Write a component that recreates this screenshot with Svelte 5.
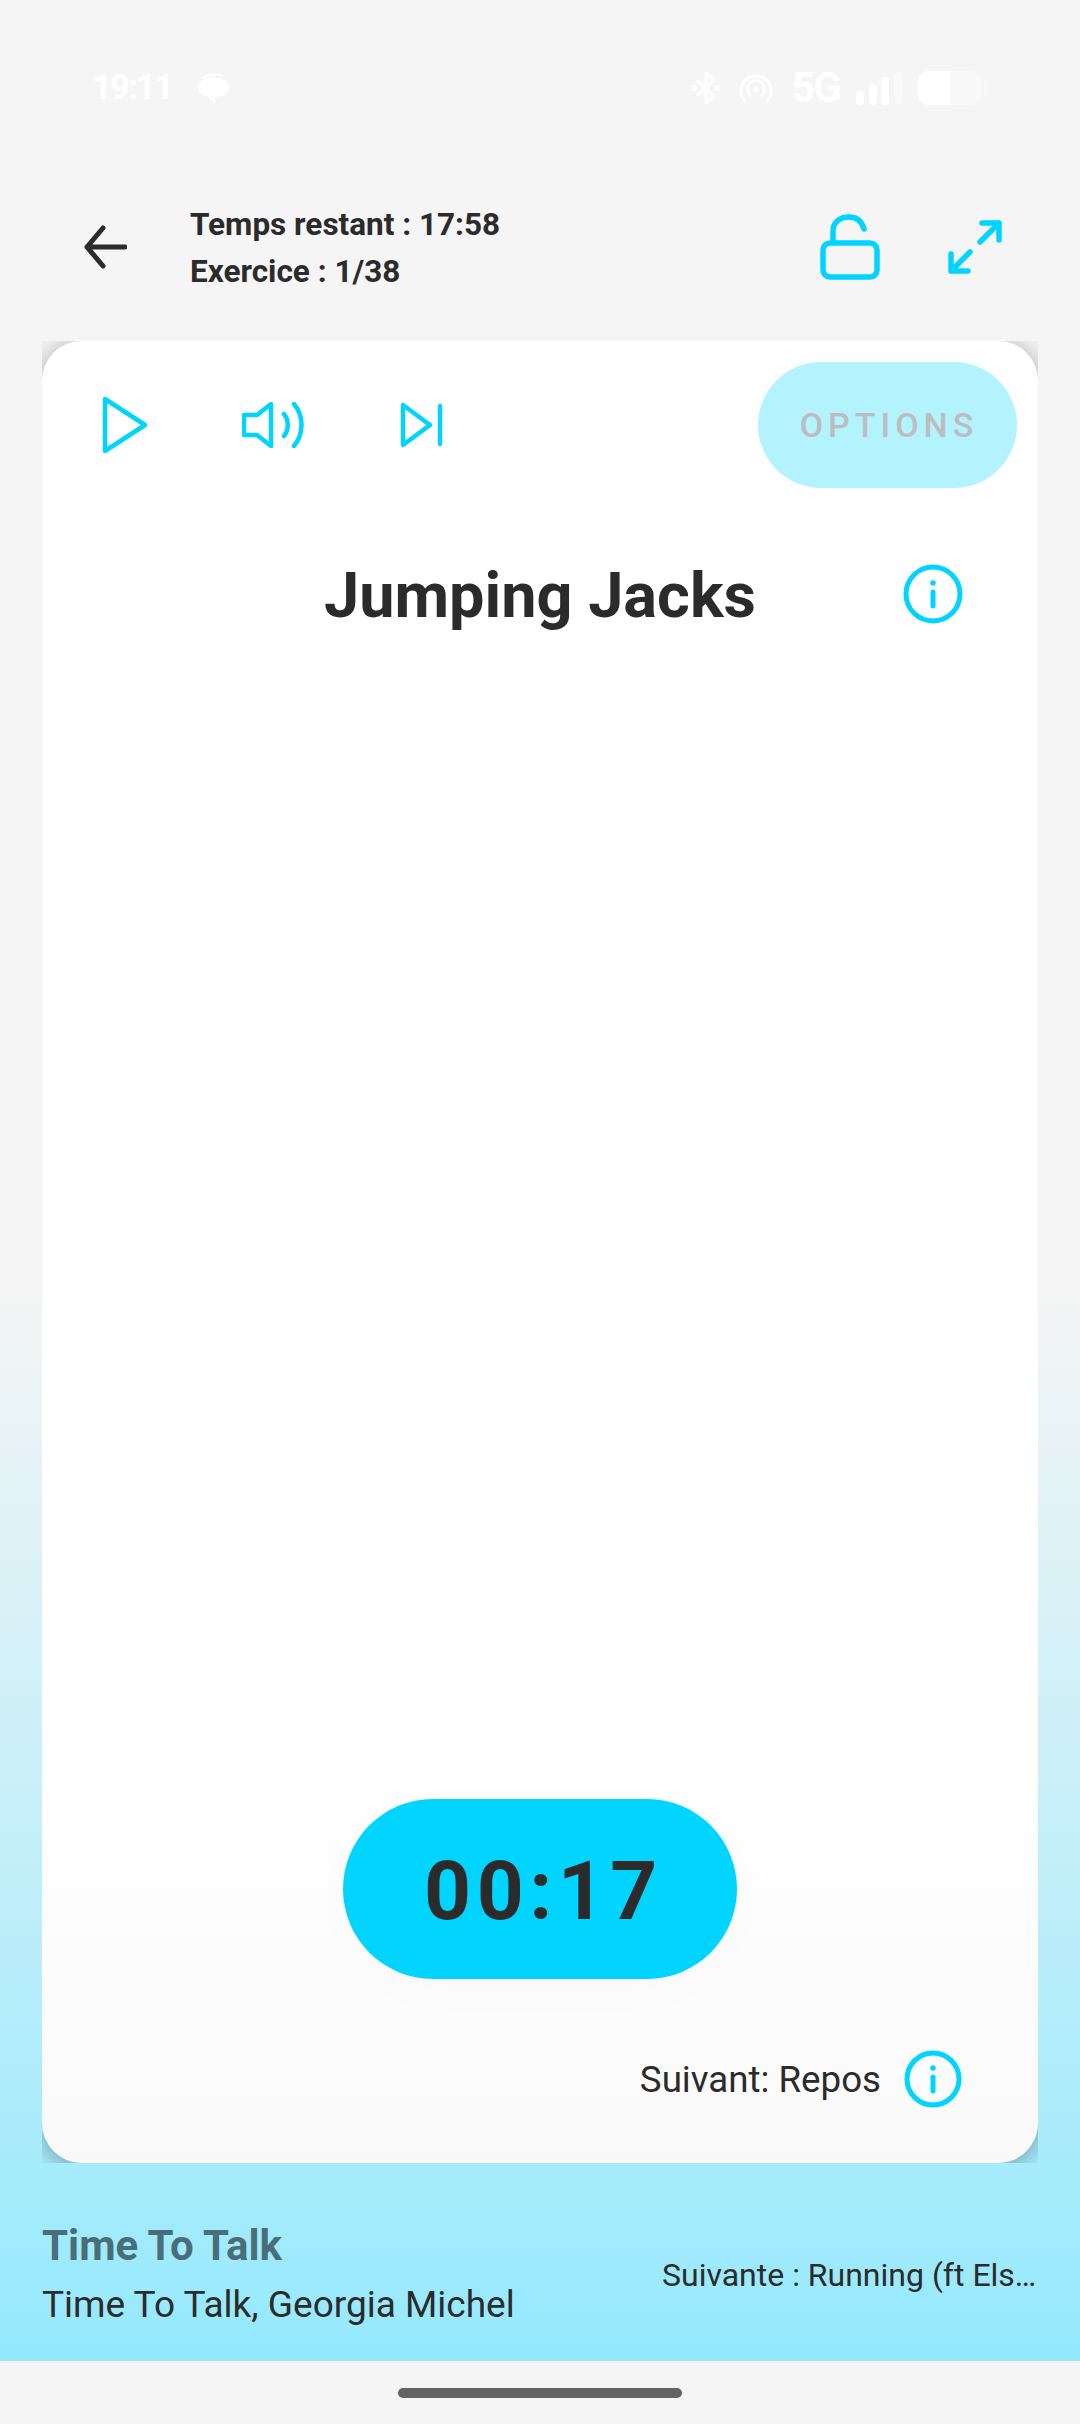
<script>
	let track = { title: 'Time To Talk', artist: 'Time To Talk, Georgia Michel' }
	let nextTrack = 'Suivante : Running (ft Elsa Lune)'
</script>

<div class="page">
	<div class="status">
		<div class="status-left">
			<span class="time">19:11</span>
			<svg width="34" height="34" viewBox="0 0 32 32" fill="#fff">
				<path d="M5 8c1-4 6-6 12-6 5 0 9 1 10 3-7-1-17 0-22 3z" opacity=".8" />
				<path d="M2 15c0-6 6-9 14-9s15 3 15 9-6 9-11 9h-2v7l-7-7C6 23 2 20 2 15z" />
			</svg>
		</div>
		<div class="status-right">
			<svg class="bt" width="28" height="34" viewBox="0 0 28 34" fill="none" stroke="#fff" stroke-width="3.4" stroke-linecap="round" stroke-linejoin="round">
				<path d="M6 10l16 15-8 7V2l8 7L6 24" />
				<circle cx="2.5" cy="17" r="1.4" fill="#fff" />
				<circle cx="25.5" cy="17" r="1.4" fill="#fff" />
			</svg>
			<svg class="hotspot" width="34" height="30" viewBox="0 0 34 30" fill="none" stroke="#fff" stroke-width="3" stroke-linecap="round">
				<path d="M6 28A15 15 0 1 1 28 28" />
				<path d="M11 22A8.5 8.5 0 1 1 23 22" />
				<circle cx="17" cy="16" r="2.6" fill="#fff" stroke="none" />
			</svg>
			<span class="net">5G</span>
			<svg class="bars" width="46" height="33" viewBox="0 0 46 33" fill="#fff">
				<rect x="0" y="19" width="8" height="14" rx="4" />
				<rect x="13" y="12" width="8" height="21" rx="4" />
				<rect x="25" y="5" width="8" height="28" rx="4" />
				<rect x="38" y="0" width="8" height="33" rx="4" opacity=".4" />
			</svg>
			<div class="battery">
				<div class="battery-level"></div>
			</div>
			<div class="battery-tip"></div>
		</div>
	</div>

	<header class="top">
		<button class="back" aria-label="Retour">
			<svg width="44" height="44" viewBox="0 0 44 44" fill="none" stroke="#2b2b2b" stroke-width="5" stroke-linecap="round" stroke-linejoin="round">
				<path d="M42 22H4M20 3L4 22l16 19" />
			</svg>
		</button>
		<div class="session">
			<div>Temps restant : 17:58</div>
			<div>Exercice : 1/38</div>
		</div>
		<svg class="lock" width="60" height="66" viewBox="0 0 60 66" fill="none" stroke="#00d4ff" stroke-width="5.5" stroke-linecap="round" stroke-linejoin="round">
			<rect x="3" y="29" width="54" height="34" rx="7" />
			<path d="M13 28V17C13 8 20 3 29 3S42 8 44 15" />
		</svg>
		<svg class="expand" width="54" height="54" viewBox="0 0 54 54" fill="none" stroke="#00d4ff" stroke-width="5.5" stroke-linecap="round" stroke-linejoin="round">
			<path d="M34 3h17v17M51 3L32 22M3 34v17h17M3 51l19-19" />
		</svg>
	</header>

	<div class="card-clip">
		<main class="card">
			<div class="controls">
				<svg width="46" height="58" viewBox="0 0 46 58" fill="none" stroke="#00d4ff" stroke-width="4.5" stroke-linejoin="round">
					<path d="M3 3L43 29 3 55z" />
				</svg>
				<svg width="64" height="46" viewBox="0 0 64 46" fill="none" stroke="#00d4ff" stroke-width="4.5" stroke-linecap="round" stroke-linejoin="round">
					<path d="M2 13h13L29 2v42L15 33H2z" />
					<path d="M42 12c5 6 5 16 0 22M52 2c10 12 10 30 0 42" />
				</svg>
				<svg width="44" height="46" viewBox="0 0 44 46" fill="none" stroke="#00d4ff" stroke-width="4.5" stroke-linecap="round" stroke-linejoin="round">
					<path d="M3 3l27 20L3 43z" />
					<path d="M40 4v38" />
				</svg>
				<button class="options">OPTIONS</button>
			</div>

			<div class="title-row">
				<h1>Jumping Jacks</h1>
				<svg class="info" width="60" height="60" viewBox="0 0 60 60" fill="none" stroke="#00d4ff" stroke-width="5" stroke-linecap="round">
					<circle cx="30" cy="30" r="27" />
					<path d="M30 28v14" />
					<circle cx="30" cy="19" r="2" fill="#00d4ff" stroke-width="1.500" />
				</svg>
			</div>

			<div class="timer">00:17</div>

			<div class="next">
				<span>Suivant: Repos</span>
				<svg width="60" height="60" viewBox="0 0 60 60" fill="none" stroke="#00d4ff" stroke-width="5" stroke-linecap="round">
					<circle cx="30" cy="30" r="26" />
					<path d="M30 28v14" />
					<circle cx="30" cy="19" r="2" fill="#00d4ff" stroke-width="1.500" />
				</svg>
			</div>
		</main>
	</div>

	<footer class="player">
		<div class="track">
			<div class="track-title">{track.title}</div>
			<div class="track-artist">{track.artist}</div>
		</div>
		<div class="up-next">{nextTrack}</div>
	</footer>

	<div class="nav">
		<div class="home"></div>
	</div>
</div>

<style>
	:global(body) {
		margin: 0;
		background: #f5f5f5;
	}

	.page {
		width: 1080px;
		height: 2424px;
		display: flex;
		flex-direction: column;
		font-family: Roboto, "Liberation Sans", sans-serif;
		color: #2b2b2b;
		background: linear-gradient(#f5f5f5 0, #f5f5f5 1290px, #95e9fd 2361px);
		overflow: hidden;
	}

	button {
		border: 0;
		padding: 0;
		background: none;
		font-family: inherit;
		display: block;
	}

	svg {
		display: block;
		flex: none;
	}

	.status {
		height: 160px;
		box-sizing: border-box;
		padding: 71px 92px 0 92px;
		display: flex;
		justify-content: space-between;
		align-items: flex-start;
		color: #fff;
	}

	.status-left {
		display: flex;
		align-items: center;
		gap: 24px;
		height: 34px;
	}

	.time {
		font-size: 35px;
		font-weight: 700;
		letter-spacing: -2px;
		line-height: 34px;
	}

	.status-right {
		display: flex;
		align-items: center;
		height: 34px;
	}

	.hotspot {
		margin-left: 19px;
	}

	.net {
		margin-left: 18px;
		font-size: 42px;
		font-weight: 700;
		line-height: 34px;
		letter-spacing: -2px;
	}

	.bars {
		margin-left: 16px;
	}

	.battery {
		width: 63px;
		height: 34px;
		margin-left: 16px;
		border-radius: 11px;
		background: rgba(255, 255, 255, 0.45);
		overflow: hidden;
	}

	.battery-level {
		width: 32px;
		height: 100%;
		background: #fff;
	}

	.battery-tip {
		width: 4px;
		height: 16px;
		margin-left: 3px;
		border-radius: 2px;
		background: rgba(255, 255, 255, 0.5);
	}

	.top {
		height: 181px;
		box-sizing: border-box;
		padding: 0 78px 8px 83px;
		display: flex;
		align-items: center;
	}

	.session {
		margin-left: 63px;
		padding-top: 3px;
		flex: 1;
		font-size: 31.5px;
		font-weight: 700;
		line-height: 47px;
	}

	.expand {
		margin-left: 68px;
	}

	.card-clip {
		margin: 0 42px;
		height: 1822px;
		overflow: hidden;
		flex: none;
	}

	.card {
		height: 100%;
		box-sizing: border-box;
		padding-bottom: 54px;
		border-radius: 40px;
		display: flex;
		flex-direction: column;
		background: linear-gradient(#fff 0, #fff 80%, #f9f9f9 100%);
		box-shadow: 0 3px 26px rgba(0, 0, 0, 0.34);
	}

	.controls {
		padding: 21px 21px 0 60px;
		display: flex;
		align-items: center;
		gap: 94px;
	}

	.options {
		margin-left: auto;
		width: 259px;
		height: 126px;
		padding-left: 3px;
		border-radius: 63px;
		background: #b3f3ff;
		color: #bdbdbd;
		font-size: 34px;
		font-weight: 500;
		letter-spacing: 5px;
	}

	.title-row {
		margin-top: 68px;
		height: 80px;
		padding: 0 75px;
		display: grid;
		grid-template-columns: 1fr auto 1fr;
		align-items: center;
	}

	h1 {
		grid-column: 2;
		margin: 0;
		font-size: 63px;
		font-weight: 700;
		line-height: 80px;
	}

	.info {
		grid-column: 3;
		justify-self: end;
		margin-top: -4px;
	}

	.timer {
		margin-top: auto;
		align-self: center;
		width: 394px;
		height: 180px;
		box-sizing: border-box;
		padding: 4px 0 0 7px;
		border-radius: 90px;
		background: #00d4ff;
		box-shadow: 0 12px 60px rgba(0, 0, 0, 0.015);
		display: flex;
		align-items: center;
		justify-content: center;
		font-size: 82px;
		font-weight: 700;
		letter-spacing: 5.5px;
	}

	.next {
		margin-top: 70px;
		padding-right: 75px;
		height: 60px;
		display: flex;
		align-items: center;
		justify-content: flex-end;
		gap: 22px;
		font-size: 36.7px;
	}

	.player {
		height: 198px;
		box-sizing: border-box;
		padding: 56px 42px 0 42px;
		display: flex;
		justify-content: space-between;
		align-items: flex-start;
		flex: none;
	}

	.track-title {
		font-size: 42px;
		font-weight: 700;
		line-height: 54px;
		color: #4a6e78;
	}

	.track-artist {
		margin-top: 5px;
		font-size: 37px;
		line-height: 54px;
	}

	.up-next {
		width: 376px;
		margin-top: 29px;
		font-size: 32px;
		line-height: 54px;
		white-space: nowrap;
		overflow: hidden;
		text-overflow: ellipsis;
	}

	.nav {
		flex: 1;
		background: #f5f5f5;
		display: flex;
		justify-content: center;
		padding-top: 27px;
	}

	.home {
		width: 284px;
		height: 10px;
		border-radius: 5px;
		background: #636363;
	}
</style>
